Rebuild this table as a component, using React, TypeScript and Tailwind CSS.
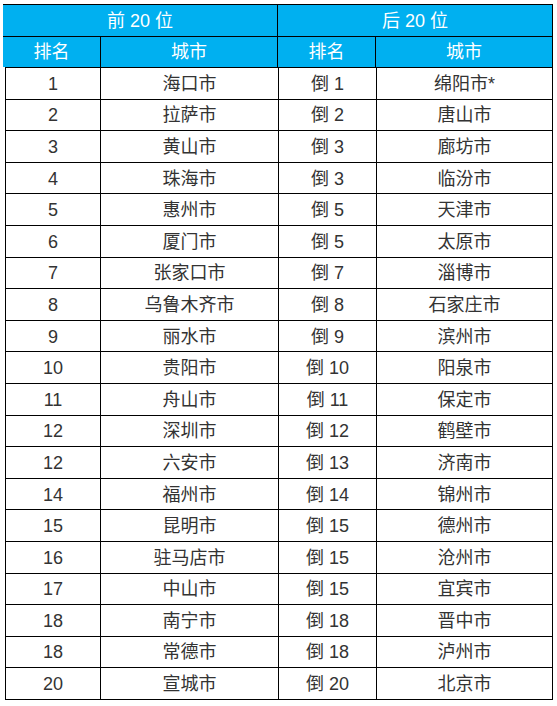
import React from "react";

const top = [
  ["1", "海口市"], ["2", "拉萨市"], ["3", "黄山市"], ["4", "珠海市"], ["5", "惠州市"],
  ["6", "厦门市"], ["7", "张家口市"], ["8", "乌鲁木齐市"], ["9", "丽水市"], ["10", "贵阳市"],
  ["11", "舟山市"], ["12", "深圳市"], ["12", "六安市"], ["14", "福州市"], ["15", "昆明市"],
  ["16", "驻马店市"], ["17", "中山市"], ["18", "南宁市"], ["18", "常德市"], ["20", "宣城市"],
];
const bottom = [
  ["倒 1", "绵阳市*"], ["倒 2", "唐山市"], ["倒 3", "廊坊市"], ["倒 3", "临汾市"], ["倒 5", "天津市"],
  ["倒 5", "太原市"], ["倒 7", "淄博市"], ["倒 8", "石家庄市"], ["倒 9", "滨州市"], ["倒 10", "阳泉市"],
  ["倒 11", "保定市"], ["倒 12", "鹤壁市"], ["倒 13", "济南市"], ["倒 14", "锦州市"], ["倒 15", "德州市"],
  ["倒 15", "沧州市"], ["倒 15", "宜宾市"], ["倒 18", "晋中市"], ["倒 18", "泸州市"], ["倒 20", "北京市"],
];

export default function App() {
  return (
    <div
      className="w-[557px] h-[706px] bg-white pt-[4px] pl-[3px]"
      style={{ fontFamily: '"Liberation Sans", "Noto Sans CJK SC", sans-serif' }}
    >
      <div className="w-[550px] text-[18px]">
        {/* header row 1 */}
        <div className="flex h-[32px] bg-[#00b0f0] text-white border-t border-black">
          <div className="w-[275px] flex items-center justify-center border-r border-black pt-[1px]">前 20 位</div>
          <div className="w-[275px] flex items-center justify-center border-r border-black pt-[1px]">后 20 位</div>
        </div>
        {/* header row 2 */}
        <div className="flex h-[31px] bg-[#00b0f0] text-white border-t border-black">
          <div className="w-[98px] flex items-center justify-center border-r border-black pt-[1px]">排名</div>
          <div className="w-[177px] flex items-center justify-center border-r border-black pt-[1px]">城市</div>
          <div className="w-[98px] flex items-center justify-center border-r border-black pt-[1px]">排名</div>
          <div className="w-[177px] flex items-center justify-center border-r border-black pt-[1px]">城市</div>
        </div>
        <div className="ml-[2px] w-[548px] border-b border-black">
          {top.map((r, i) => (
            <div key={i} className="flex h-[31.6px] border-t border-black text-[#333] border-l">
              <div className="w-[95px] flex items-center justify-center border-r border-black pt-[2px]">{r[0]}</div>
              <div className="w-[178px] flex items-center justify-center border-r border-black pt-[2px]">{r[1]}</div>
              <div className="w-[98px] flex items-center justify-center border-r border-black pt-[2px]">{bottom[i][0]}</div>
              <div className="w-[176px] flex items-center justify-center border-r border-black pt-[2px]">{bottom[i][1]}</div>
            </div>
          ))}
        </div>
      </div>
    </div>
  );
}
